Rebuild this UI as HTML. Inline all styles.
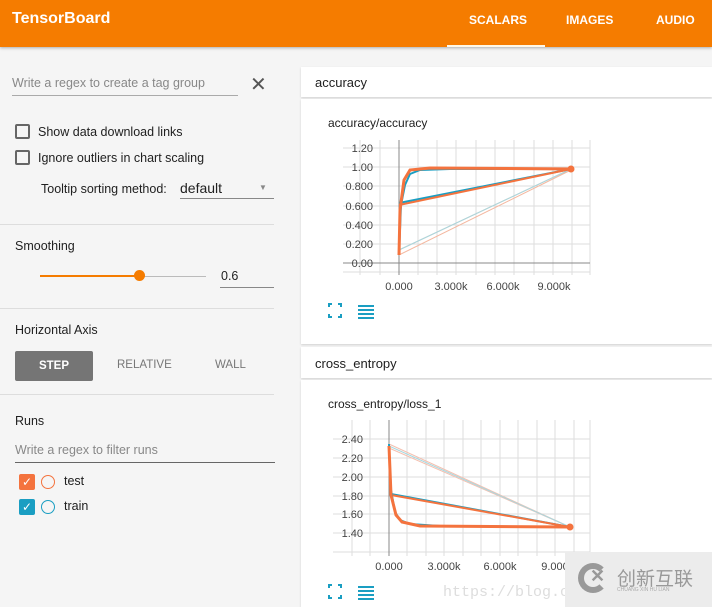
<!DOCTYPE html>
<html><head><meta charset="utf-8"><style>
*{box-sizing:border-box;margin:0;padding:0}
body{width:712px;height:607px;overflow:hidden;background:#f5f5f5;font-family:"Liberation Sans",sans-serif;position:relative;color:#212121}
.hdr{position:absolute;left:0;top:0;width:712px;height:47px;background:#f57c00;box-shadow:0 1px 3px rgba(0,0,0,.3)}
.hdr .t{position:absolute;left:12px;top:10px;color:#fff;font-size:16px;font-weight:bold}
.tab{position:absolute;top:13px;color:#fff;font-size:12px;font-weight:bold}
.ab{position:absolute;font-size:12.5px}
.cb{position:absolute;width:15px;height:15px;border:2px solid #666;border-radius:2px}
.line{position:absolute;height:1px;background:#888}
.sep{position:absolute;left:0;width:274px;height:1px;background:#ddd}
.card{position:absolute;left:301px;width:411px;background:#fff;box-shadow:0 1px 2px rgba(0,0,0,.15)}
</style></head><body>
<div class="hdr"><div class="t">TensorBoard</div>
<div class="tab" style="left:469px">SCALARS</div><div class="tab" style="left:566px">IMAGES</div><div class="tab" style="left:656px">AUDIO</div>
<div style="position:absolute;left:447px;top:45px;width:98px;height:2px;background:#fff8e8"></div></div>

<div class="ab" style="left:12px;top:76px;color:#888">Write a regex to create a tag group</div>
<div class="line" style="left:12px;top:95px;width:226px;background:#aaa"></div>
<div class="ab" style="left:250px;top:72px;font-size:20px;color:#555">✕</div>
<div class="cb" style="left:15px;top:124px"></div><div class="ab" style="left:38px;top:125px">Show data download links</div>
<div class="cb" style="left:15px;top:150px"></div><div class="ab" style="left:38px;top:151px">Ignore outliers in chart scaling</div>
<div class="ab" style="left:41px;top:182px">Tooltip sorting method:</div>
<div class="ab" style="left:180px;top:180px;font-size:14px">default</div>
<div class="ab" style="left:259px;top:183px;font-size:8px;color:#888">▼</div>
<div class="line" style="left:180px;top:198px;width:94px"></div>
<div class="sep" style="top:224px"></div>
<div class="ab" style="left:15px;top:239px">Smoothing</div>
<div style="position:absolute;left:40px;top:275px;width:100px;height:2px;background:#f57c00"></div>
<div style="position:absolute;left:140px;top:276px;width:66px;height:1px;background:#bbb"></div>
<div style="position:absolute;left:134px;top:270px;width:11px;height:11px;border-radius:50%;background:#f57c00"></div>
<div class="ab" style="left:221px;top:269px">0.6</div>
<div class="line" style="left:220px;top:287px;width:54px"></div>
<div class="sep" style="top:308px"></div>
<div class="ab" style="left:15px;top:323px">Horizontal Axis</div>
<div style="position:absolute;left:15px;top:351px;width:78px;height:30px;background:#757575;border-radius:2px;color:#fff;font-size:11.5px;font-weight:bold;text-align:center;line-height:30px">STEP</div>
<div class="ab" style="left:117px;top:359px;font-size:11.5px;color:#777">RELATIVE</div>
<div class="ab" style="left:215px;top:359px;font-size:11.5px;color:#777">WALL</div>
<div class="sep" style="top:394px"></div>
<div class="ab" style="left:15px;top:414px">Runs</div>
<div class="ab" style="left:15px;top:443px;color:#888">Write a regex to filter runs</div>
<div class="line" style="left:15px;top:462px;width:260px;background:#666"></div>
<div style="position:absolute;left:19px;top:474px;width:16px;height:16px;background:#f4733e;border-radius:2px;color:#fff;font-size:12px;text-align:center;line-height:16px">✓</div>
<div style="position:absolute;left:41px;top:475px;width:14px;height:14px;border:1.5px solid #f4733e;border-radius:50%"></div>
<div class="ab" style="left:64px;top:474px">test</div>
<div style="position:absolute;left:19px;top:499px;width:16px;height:16px;background:#1a9ec2;border-radius:2px;color:#fff;font-size:12px;text-align:center;line-height:16px">✓</div>
<div style="position:absolute;left:41px;top:500px;width:14px;height:14px;border:1.5px solid #1a9ec2;border-radius:50%"></div>
<div class="ab" style="left:64px;top:499px">train</div>

<div class="card" style="top:67px;height:30px"><div class="ab" style="left:14px;top:8px;font-size:13px">accuracy</div></div>
<div class="card" style="top:99px;height:245px"></div>
<div class="card" style="top:347px;height:31px"><div class="ab" style="left:14px;top:9px;font-size:13px">cross_entropy</div></div>
<div class="card" style="top:380px;height:227px"></div>

<svg style="position:absolute;left:0;top:0" width="712" height="607" font-family="Liberation Sans" font-size="11" fill="#444">
<text x="328" y="127" font-size="12" fill="#212121">accuracy/accuracy</text>
<g stroke="#ddd" stroke-width="1">
<path d="M343 148H590M343 167H590M343 186H590M343 206H590M343 225H590M343 244H590M343 272H590M590 140V275"/>
<path d="M360 140V275M380 140V275M418 140V275M437 140V275M456 140V275M476 140V275M495 140V275M514 140V275M534 140V275M553 140V275M572 140V275"/>
</g>
<path d="M343 263H590M399 140V275" stroke="#888"/>
<g text-anchor="end"><text x="373" y="152">1.20</text><text x="373" y="171">1.00</text><text x="373" y="190">0.800</text><text x="373" y="210">0.600</text><text x="373" y="229">0.400</text><text x="373" y="248">0.200</text><text x="373" y="267">0.00</text></g>
<g text-anchor="middle"><text x="399" y="290">0.000</text><text x="451" y="290">3.000k</text><text x="503" y="290">6.000k</text><text x="554" y="290">9.000k</text></g>
<path d="M399 250L571 169M399 255L571 170" stroke="#f4b8a0" stroke-width="1" fill="none"/>
<path d="M399 250L571 169" stroke="#a8d8e0" stroke-width="1"/>
<path d="M399 203L571 169" stroke="#1a9ec2" stroke-width="2"/>
<path d="M399 205L571 169" stroke="#f4733e" stroke-width="2"/>
<path d="M399 255L401 205L405 185L410 174L420 170L450 169L571 169" stroke="#1a9ec2" stroke-width="2" fill="none"/>
<path d="M399 255L400 210L404 180L410 170L430 168L571 169" stroke="#f4733e" stroke-width="3" fill="none"/>
<circle cx="571" cy="169" r="3.5" fill="#f4733e"/>
<path d="M329 307v-3h3M338 304h3v3M329 314v3h3M338 317h3v-3" stroke="#1a9ec2" stroke-width="2" fill="none"/>
<path d="M358 306h16M358 310h16M358 314h16M358 318h16" stroke="#1a9ec2" stroke-width="2"/>

<text x="328" y="408" font-size="12" fill="#212121">cross_entropy/loss_1</text>
<g stroke="#ddd" stroke-width="1">
<path d="M333 439H590M333 458H590M333 477H590M333 496H590M333 514H590M333 533H590M333 552H590M590 420V556"/>
<path d="M352 420V556M370 420V556M407 420V556M426 420V556M444 420V556M463 420V556M481 420V556M500 420V556M518 420V556M537 420V556M555 420V556M574 420V556"/>
</g>
<path d="M389 420V556" stroke="#888"/>
<g text-anchor="end"><text x="363" y="443">2.40</text><text x="363" y="462">2.20</text><text x="363" y="481">2.00</text><text x="363" y="500">1.80</text><text x="363" y="518">1.60</text><text x="363" y="537">1.40</text></g>
<g text-anchor="middle"><text x="389" y="570">0.000</text><text x="444" y="570">3.000k</text><text x="500" y="570">6.000k</text><text x="555" y="570">9.000</text></g>
<path d="M389 444L570 527M389 448L570 527" stroke="#f4c0b0" stroke-width="1"/>
<path d="M389 446L570 527" stroke="#a8d8e0" stroke-width="1"/>
<path d="M391 494L570 527" stroke="#1a9ec2" stroke-width="2"/>
<path d="M391 495L570 527" stroke="#f4733e" stroke-width="2"/>
<path d="M389 444L391 490L395 512L400 520L410 524L440 526L570 527" stroke="#1a9ec2" stroke-width="2" fill="none"/>
<path d="M389 446L391 495L396 515L402 522L420 526L570 527" stroke="#f4733e" stroke-width="3" fill="none"/>
<circle cx="570" cy="527" r="3.5" fill="#f4733e"/>
<path d="M329 588v-3h3M338 585h3v3M329 595v3h3M338 598h3v-3" stroke="#1a9ec2" stroke-width="2" fill="none"/>
<path d="M358 587h16M358 591h16M358 595h16M358 599h16" stroke="#1a9ec2" stroke-width="2"/>
<text x="443" y="596" font-family="Liberation Mono" font-size="15" fill="#ddd">https://blog.c</text>
</svg>
<div style="position:absolute;left:565px;top:552px;width:147px;height:55px;background:#ececec"></div>
<div style="position:absolute;left:578px;top:563px;width:30px;height:30px;border:6px solid #999;border-right-color:transparent;border-radius:50%"></div>
<div style="position:absolute;left:590px;top:566px;font-size:18px;font-weight:bold;color:#999">✕</div>
<div style="position:absolute;left:617px;top:564px;font-size:19px;color:#999;font-family:'Liberation Sans','Noto Sans CJK SC',sans-serif">创新互联</div>
<div style="position:absolute;left:617px;top:587px;font-size:5px;color:#aaa">CHUANG XIN HU LIAN</div>
</body></html>
